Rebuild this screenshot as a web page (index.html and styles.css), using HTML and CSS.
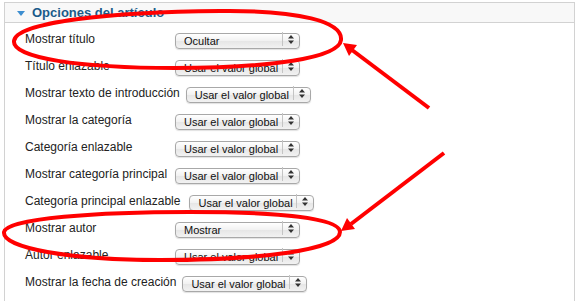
FILE: index.html
```html
<!DOCTYPE html>
<html lang="es">
<head>
    <meta charset="UTF-8">
    <meta name="viewport" content="width=device-width, initial-scale=1.0">
    <title>Opciones del artículo</title>
    <link rel="stylesheet" href="styles.css">
</head>
<body>
    <div class="panel">
        <h3 class="panel-title"><span class="toggle"></span>Opciones del artículo</h3>
        <ul class="options">
            <li><label>Mostrar título</label><span class="select-wrap"><select><option>Ocultar</option></select><span class="arrows"><svg width="6" height="9" viewBox="0 0 6 9"><path d="M3 0L6 3.5H0Z M3 9L6 5.5H0Z" fill="#333"/></svg></span></span></li>
            <li><label>Título enlazable</label><span class="select-wrap"><select><option>Usar el valor global</option></select><span class="arrows"><svg width="6" height="9" viewBox="0 0 6 9"><path d="M3 0L6 3.5H0Z M3 9L6 5.5H0Z" fill="#333"/></svg></span></span></li>
            <li><label>Mostrar texto de introducción</label><span class="select-wrap"><select><option>Usar el valor global</option></select><span class="arrows"><svg width="6" height="9" viewBox="0 0 6 9"><path d="M3 0L6 3.5H0Z M3 9L6 5.5H0Z" fill="#333"/></svg></span></span></li>
            <li><label>Mostrar la categoría</label><span class="select-wrap"><select><option>Usar el valor global</option></select><span class="arrows"><svg width="6" height="9" viewBox="0 0 6 9"><path d="M3 0L6 3.5H0Z M3 9L6 5.5H0Z" fill="#333"/></svg></span></span></li>
            <li><label>Categoría enlazable</label><span class="select-wrap"><select><option>Usar el valor global</option></select><span class="arrows"><svg width="6" height="9" viewBox="0 0 6 9"><path d="M3 0L6 3.5H0Z M3 9L6 5.5H0Z" fill="#333"/></svg></span></span></li>
            <li><label>Mostrar categoría principal</label><span class="select-wrap"><select><option>Usar el valor global</option></select><span class="arrows"><svg width="6" height="9" viewBox="0 0 6 9"><path d="M3 0L6 3.5H0Z M3 9L6 5.5H0Z" fill="#333"/></svg></span></span></li>
            <li><label class="wide">Categoría principal enlazable</label><span class="select-wrap"><select><option>Usar el valor global</option></select><span class="arrows"><svg width="6" height="9" viewBox="0 0 6 9"><path d="M3 0L6 3.5H0Z M3 9L6 5.5H0Z" fill="#333"/></svg></span></span></li>
            <li><label>Mostrar autor</label><span class="select-wrap"><select><option>Mostrar</option></select><span class="arrows"><svg width="6" height="9" viewBox="0 0 6 9"><path d="M3 0L6 3.5H0Z M3 9L6 5.5H0Z" fill="#333"/></svg></span></span></li>
            <li><label>Autor enlazable</label><span class="select-wrap"><select><option>Usar el valor global</option></select><span class="arrows"><svg width="6" height="9" viewBox="0 0 6 9"><path d="M3 0L6 3.5H0Z M3 9L6 5.5H0Z" fill="#333"/></svg></span></span></li>
            <li><label>Mostrar la fecha de creación</label><span class="select-wrap"><select><option>Usar el valor global</option></select><span class="arrows"><svg width="6" height="9" viewBox="0 0 6 9"><path d="M3 0L6 3.5H0Z M3 9L6 5.5H0Z" fill="#333"/></svg></span></span></li>
        </ul>
    </div>

    <!-- red annotations drawn over the screenshot -->
    <svg class="marks" width="577" height="302" viewBox="0 0 577 302">
        <g fill="none" stroke="#f00" stroke-width="4">
            <path d="M14 41C16 22 110 12 220 11C300 10 343 22 341 40C339 58 270 68 175 68C80 68 12 58 14 41Z"/>
            <path d="M4 232C6 218 100 212 190 212C280 212 340 218 340 232C340 250 260 260 160 260C70 260 2 248 4 232Z"/>
            <line x1="429" y1="108" x2="352" y2="50"/>
            <line x1="444" y1="153" x2="351" y2="224"/>
        </g>
        <g fill="#f00">
            <polygon points="343,43 349,56 357,45"/>
            <polygon points="341,231 355,229 347,218"/>
        </g>
    </svg>
</body>
</html>
```

FILE: styles.css
```css
body {
    margin: 0;
    padding: 2px 2px 0 4px;
    font-family: "Liberation Sans", Arial, sans-serif;
    background-color: #fff;
    color: #222;
    overflow: hidden;
}
.panel {
    border: 1px solid #d2d2d2;
    border-bottom: none;
    height: 299px;
    box-sizing: border-box;
}
.panel-title {
    margin: 0;
    height: 19px;
    display: flex;
    align-items: center;
    padding-left: 12px;
    background-color: #f8f8f8;
    border-bottom: 1px solid #d2d2d2;
    font-size: 13px;
    font-weight: bold;
    color: #1a5b8a;
}
.toggle {
    width: 0;
    height: 0;
    border-left: 4px solid transparent;
    border-right: 4px solid transparent;
    border-top: 5px solid #3d8ed0;
    margin: 2px 7px 0 0;
}
.options {
    list-style: none;
    margin: 0;
    padding: 3px 0 0 20px;
}
.options li {
    display: flex;
    align-items: center;
    padding: 5px 0 6px;
}
.options label {
    min-width: 144px;
    margin-right: 6px;
    font-size: 12px;
    line-height: 14px;
}
.options label.wide {
    margin-right: 9px;
}
.select-wrap {
    position: relative;
    display: block;
    width: 125px;
    height: 16px;
}
.select-wrap select {
    -webkit-appearance: none;
    appearance: none;
    box-sizing: border-box;
    width: 100%;
    height: 16px;
    margin: 0;
    padding: 0 0 0 8px;
    border: 1px solid #a8a8a8;
    border-radius: 4px;
    background: linear-gradient(#ffffff, #f1f1f1 50%, #e6e6e6 51%, #f2f2f2);
    box-shadow: 0 1px 1px rgba(0, 0, 0, 0.12);
    font-family: "Liberation Sans", Arial, sans-serif;
    font-size: 11px;
    line-height: 14px;
    color: #111;
}
.arrows {
    position: absolute;
    top: 1px;
    right: 1px;
    width: 16px;
    height: 14px;
    border-left: 1px solid #c4c4c4;
    display: flex;
    align-items: center;
    justify-content: center;
    pointer-events: none;
}
.marks {
    position: absolute;
    top: 0;
    left: 0;
    pointer-events: none;
}
```
